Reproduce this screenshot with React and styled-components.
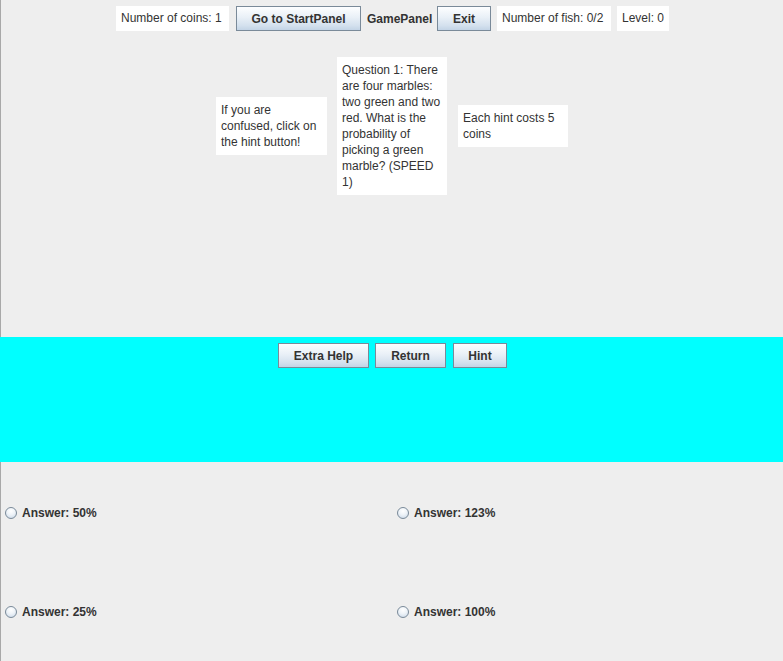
import React from 'react';
import styled, { createGlobalStyle } from 'styled-components';

const GlobalStyle = createGlobalStyle`
  html, body {
    margin: 0;
    padding: 0;
    background: #eeeeee;
  }
  body {
    font-family: "Liberation Sans", Arial, sans-serif;
    font-size: 12px;
    color: #333333;
  }
`;

const answers = ['Answer: 50%', 'Answer: 123%', 'Answer: 25%', 'Answer: 100%'];

export default function App() {
  return (
    <Frame>
      <GlobalStyle />
      <TopArea>
        <TopBar>
          <InfoLabel $w={113}>Number of coins: 1</InfoLabel>
          <SwingButton $w={125} $gap={7}>Go to StartPanel</SwingButton>
          <TitleLabel>GamePanel</TitleLabel>
          <SwingButton $w={54}>Exit</SwingButton>
          <InfoLabel $w={114}>Number of fish: 0/2</InfoLabel>
          <InfoLabel $w={52}>Level: 0</InfoLabel>
        </TopBar>
        <QuestionRow>
          <TextBox $w={111}>If you are<br />confused, click on<br />the hint button!</TextBox>
          <TextBox $w={110}>
            Question 1: There<br />are four marbles:<br />two green and two<br />red. What is the<br />
            probability of<br />picking a green<br />marble? (SPEED<br />1)
          </TextBox>
          <TextBox $w={110} $gap={11}>Each hint costs 5<br />coins</TextBox>
        </QuestionRow>
      </TopArea>
      <HelpPanel>
        <SwingButton $w={91}>Extra Help</SwingButton>
        <SwingButton $w={71}>Return</SwingButton>
        <SwingButton $w={54} $gap={7}>Hint</SwingButton>
      </HelpPanel>
      <AnswerGrid>
        {answers.map((a) => (
          <AnswerCell key={a}>
            <Radio />
            <AnswerText>{a}</AnswerText>
          </AnswerCell>
        ))}
      </AnswerGrid>
    </Frame>
  );
}

const Frame = styled.div`
  width: 783px;
  height: 661px;
  display: flex;
  flex-direction: column;
  overflow: hidden;
`;

const TopArea = styled.div`
  height: 337px;
  box-sizing: border-box;
  border-left: 1px solid #a8a8a8;
  display: flex;
  flex-direction: column;
`;

const TopBar = styled.div`
  display: flex;
  justify-content: flex-start;
  align-items: center;
  gap: 6px;
  padding-top: 6px;
  padding-left: 115px;
  height: 25px;
`;

const InfoLabel = styled.div`
  background: #ffffff;
  width: ${(p) => p.$w}px;
  box-sizing: border-box;
  height: 25px;
  line-height: 25px;
  padding: 0 5px;
  white-space: nowrap;
`;

const TitleLabel = styled.div`
  font-weight: bold;
  white-space: nowrap;
  width: 64px;
`;

const SwingButton = styled.button`
  width: ${(p) => p.$w}px;
  height: 25px;
  margin-left: ${(p) => (p.$gap ? p.$gap - 6 : 0)}px;
  box-sizing: border-box;
  border: 1px solid #7a8a99;
  background: linear-gradient(to bottom, #fdfeff 0%, #e9f0f7 45%, #d4e1ee 80%, #c3d4e6 100%);
  font-family: "Liberation Sans", Arial, sans-serif;
  font-size: 12px;
  font-weight: bold;
  color: #333333;
  padding: 0;
  cursor: pointer;
`;

const QuestionRow = styled.div`
  display: flex;
  justify-content: flex-start;
  align-items: center;
  margin-top: 27px;
  height: 136px;
  padding-left: 215px;
`;

const TextBox = styled.div`
  background: #ffffff;
  width: ${(p) => p.$w}px;
  margin-left: ${(p) => p.$gap || 10}px;
  &:first-child {
    margin-left: 0;
  }
  box-sizing: border-box;
  padding: 5px 5px;
  line-height: 16px;
  white-space: nowrap;
`;

const HelpPanel = styled.div`
  height: 125px;
  background: #00ffff;
  display: flex;
  justify-content: flex-start;
  align-items: flex-start;
  gap: 6px;
  padding-top: 6px;
  padding-left: 278px;
  box-sizing: border-box;
`;

const AnswerGrid = styled.div`
  flex: 1;
  display: grid;
  grid-template-columns: 392px 1fr;
  grid-template-rows: 99px 1fr;
  border-left: 1px solid #a8a8a8;
`;

const AnswerCell = styled.label`
  display: flex;
  align-items: center;
  gap: 5px;
  padding-left: 4px;
  padding-top: 2px;
`;

const Radio = styled.span`
  width: 12px;
  height: 12px;
  border-radius: 50%;
  box-sizing: border-box;
  border: 1px solid #7a8a99;
  background: radial-gradient(circle at 50% 30%, #ffffff 0%, #eef3f8 45%, #c7d6e6 100%);
  flex: none;
`;

const AnswerText = styled.span`
  font-weight: bold;
  color: #333333;
`;
